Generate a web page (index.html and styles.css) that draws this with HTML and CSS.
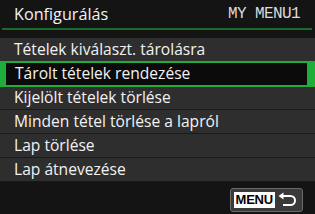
FILE: index.html
```html
<!DOCTYPE html>
<html>
<head>
<meta charset="utf-8">
<link rel="stylesheet" href="styles.css">
</head>
<body>
<div class="screen">
  <div class="header">
    <span class="title">Konfigurálás</span>
    <span class="tab">MY MENU1</span>
  </div>
  <div class="rule"></div>
  <ul class="list">
    <li class="row">Tételek kiválaszt. tárolásra</li>
    <li class="row selected">Tárolt tételek rendezése</li>
    <li class="row">Kijelölt tételek törlése</li>
    <li class="row">Minden tétel törlése a lapról</li>
    <li class="row">Lap törlése</li>
    <li class="row">Lap átnevezése</li>
  </ul>
  <div class="footer">
    <div class="menu-btn">
      <span class="menu-label">MENU</span>
      <svg class="back" width="20" height="16" viewBox="0 0 20 16">
        <path d="M4 4 H12.5 A4.5 4.5 0 0 1 12.5 13 H5" fill="none" stroke="#fff" stroke-width="2"/>
        <path d="M0.5 4 L5.5 0.5 L5.5 7.5 Z" fill="#fff"/>
      </svg>
    </div>
  </div>
</div>
</body>
</html>
```
FILE: styles.css
```css
html, body {
  margin: 0;
  padding: 0;
  background: #141414;
}
.screen {
  width: 315px;
  height: 214px;
  background: #141414;
  font-family: "Open Sans", "Liberation Sans", sans-serif;
  color: #f2f2f2;
  overflow: hidden;
}
.header {
  height: 28px;
  display: flex;
  justify-content: space-between;
  align-items: flex-end;
  padding: 0 15px 0 14px;
  box-sizing: border-box;
}
.title {
  font-size: 16.2px;
  line-height: 24px;
  padding-bottom: 2px;
}
.tab {
  font-family: "Liberation Mono", monospace;
  font-size: 16px;
  letter-spacing: -0.6px;
  color: #dcdcdc;
  line-height: 24px;
  padding-bottom: 2px;
}
.rule {
  height: 2px;
  margin: 0 3px 0 2px;
  background: #1d6b2b;
}
.list {
  list-style: none;
  margin: 8px 0 0 0;
  padding: 0;
}
.row {
  height: 24px;
  box-sizing: border-box;
  background: #2e2e2e;
  border-bottom: 1px solid #1a1a1a;
  padding-left: 14px;
  font-size: 15.6px;
  line-height: 23px;
  white-space: nowrap;
}
.row.selected {
  height: 26px;
  margin: -1px 0;
  position: relative;
  background: #0b0b0b;
  border: 2px solid #1fae3c;
  border-left-width: 6px;
  border-right-width: 8px;
  padding-left: 9px;
  line-height: 21px;
}
.footer {
  display: flex;
  justify-content: flex-end;
  padding: 6px 12px 0 0;
}
.menu-btn {
  display: flex;
  align-items: center;
  gap: 3px;
  height: 22px;
  padding: 0 4px 0 3px;
  border: 1px solid #6a6a6a;
  border-radius: 3px;
  background: #3a3a3a;
}
.menu-label {
  background: #fff;
  color: #000;
  font-family: "Liberation Sans", sans-serif;
  font-weight: bold;
  font-size: 13px;
  line-height: 16px;
  padding: 0 2px;
  letter-spacing: -0.2px;
}
.back {
  display: block;
}
```
